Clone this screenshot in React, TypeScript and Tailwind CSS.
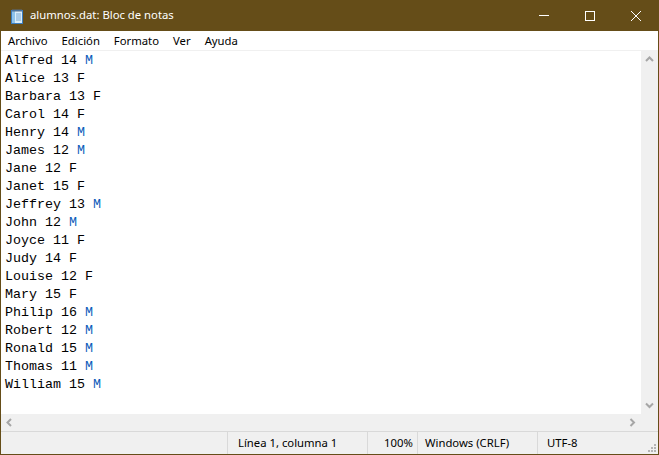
import React from 'react';

const rows: [string, string, 'M' | 'F'][] = [
  ['Alfred', '14', 'M'],
  ['Alice', '13', 'F'],
  ['Barbara', '13', 'F'],
  ['Carol', '14', 'F'],
  ['Henry', '14', 'M'],
  ['James', '12', 'M'],
  ['Jane', '12', 'F'],
  ['Janet', '15', 'F'],
  ['Jeffrey', '13', 'M'],
  ['John', '12', 'M'],
  ['Joyce', '11', 'F'],
  ['Judy', '14', 'F'],
  ['Louise', '12', 'F'],
  ['Mary', '15', 'F'],
  ['Philip', '16', 'M'],
  ['Robert', '12', 'M'],
  ['Ronald', '15', 'M'],
  ['Thomas', '11', 'M'],
  ['William', '15', 'M'],
];

const menus = ['Archivo', 'Edición', 'Formato', 'Ver', 'Ayuda'];

const NotepadIcon = () => (
  <svg width="16" height="16" viewBox="0 0 16 16">
    <rect x="2.5" y="2.5" width="11" height="13" fill="#dbeefa" stroke="#3b7dbf" />
    <rect x="3" y="3" width="3" height="12" fill="#8fc3ea" />
    <path d="M7 6h5M7 8h5M7 10h5M7 12h5" stroke="#7aa8d0" strokeWidth="1" />
    <path d="M4 1v3M6 1v3M8 1v3M10 1v3M12 1v3" stroke="#5a6f86" strokeWidth="1" />
  </svg>
);

const Chevron = ({ dir }: { dir: 'up' | 'down' | 'left' | 'right' }) => {
  const d = {
    up: 'M1 6l3.5-3.5L8 6',
    down: 'M1 2.5l3.5 3.5L8 2.5',
    left: 'M6 1L2.5 4.5 6 8',
    right: 'M2.5 1L6 4.5 2.5 8',
  }[dir];
  return (
    <svg width="9" height="9" viewBox="0 0 9 9">
      <path d={d} fill="none" stroke="#a6a6a6" strokeWidth="2" />
    </svg>
  );
};

const Grip = () => (
  <svg width="10" height="10" viewBox="0 0 10 10">
    {[
      [8, 2], [5, 5], [8, 5], [2, 8], [5, 8], [8, 8],
    ].map(([x, y], i) => (
      <rect key={i} x={x - 1} y={y - 1} width="2" height="2" fill="#b4b4b4" />
    ))}
  </svg>
);

export default function App() {
  return (
    <div className="w-[659px] h-[455px] bg-[#654d18] px-px pb-px flex flex-col font-['Noto_Sans','Liberation_Sans',sans-serif] overflow-hidden">
      {/* title bar */}
      <div className="h-[31px] flex items-center text-white text-[11.3px] shrink-0">
        <div className="pl-[8px] pr-[5px] flex items-center">
          <NotepadIcon />
        </div>
        <span className="flex-1 leading-none pb-px">alumnos.dat: Bloc de notas</span>
        <div className="flex h-full">
          <div className="w-[46px] flex items-center justify-center">
            <div className="w-[10px] h-px bg-white" />
          </div>
          <div className="w-[46px] flex items-center justify-center">
            <div className="w-[10px] h-[10px] border border-white" />
          </div>
          <div className="w-[45px] flex items-center justify-center">
            <svg width="10" height="10" viewBox="0 0 10 10">
              <path d="M0 0L10 10M10 0L0 10" stroke="white" strokeWidth="1" />
            </svg>
          </div>
        </div>
      </div>

      {/* menu bar */}
      <div className="h-[19px] bg-white flex items-center text-[11.3px] text-black shrink-0">
        {menus.map((m) => (
          <span key={m} className="px-[7px] leading-none">{m}</span>
        ))}
      </div>
      <div className="h-px bg-[#f0f0f0] shrink-0" />

      {/* editor */}
      <div className="flex-1 flex min-h-0">
        <div className="flex-1 bg-white pl-[4px] pt-px font-['Liberation_Mono',monospace] text-[13.33px] leading-[18px] text-black">
          {rows.map(([n, a, s]) => (
            <div key={n} className="whitespace-pre">
              {n} {a} <span className={s === 'M' ? 'text-[#0a5cba]' : ''}>{s}</span>
            </div>
          ))}
        </div>
        <div className="w-[17px] bg-[#f0f0f0] flex flex-col items-center justify-between py-[4px]">
          <Chevron dir="up" />
          <Chevron dir="down" />
        </div>
      </div>

      {/* horizontal scrollbar */}
      <div className="h-[17px] flex shrink-0">
        <div className="flex-1 bg-[#f0f0f0] flex items-center justify-between px-[4px]">
          <Chevron dir="left" />
          <Chevron dir="right" />
        </div>
        <div className="w-[17px] bg-[#f0f0f0]" />
      </div>
      <div className="h-px bg-[#d9d9d9] shrink-0" />

      {/* status bar */}
      <div className="h-[22px] bg-[#f0f0f0] flex text-[11.3px] text-black shrink-0">
        <div className="flex-1" />
        <div className="w-[140px] border-l border-[#d9d9d9] pl-[10px] flex items-center">Línea 1, columna 1</div>
        <div className="w-[50px] border-l border-[#d9d9d9] pl-[16px] flex items-center">100%</div>
        <div className="w-[120px] border-l border-[#d9d9d9] pl-[7px] flex items-center">Windows (CRLF)</div>
        <div className="w-[121px] border-l border-[#d9d9d9] pl-[9px] flex items-center justify-between">
          <span>UTF-8</span>
          <div className="self-end mb-[1px] mr-[1px]">
            <Grip />
          </div>
        </div>
      </div>
    </div>
  );
}
